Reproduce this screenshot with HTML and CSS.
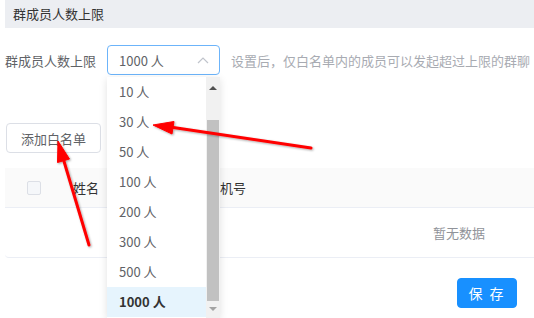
FILE: index.html
```html
<!DOCTYPE html>
<html lang="zh-CN">

<head>
    <meta charset="UTF-8">
    <meta name="viewport" content="width=device-width, initial-scale=1.0">
    <title>群成员人数上限</title>
    <link rel="stylesheet" href="styles.css">
</head>

<body>
    <div class="page">
        <div class="section-title">群成员人数上限</div>

        <div class="form-row">
            <label class="form-label">群成员人数上限</label>
            <div class="select is-focus">
                <span class="select-value">1000 人</span>
                <svg class="select-arrow" width="12" height="8" viewBox="0 0 12 8">
                    <path d="M1 7 L6 2 L11 7" fill="none" stroke="#c0c4cc" stroke-width="1.2"/>
                </svg>
            </div>
            <span class="form-tip">设置后，仅白名单内的成员可以发起超过上限的群聊</span>
        </div>

        <button class="btn">添加白名单</button>

        <div class="table">
            <div class="table-head">
                <div class="cell cell-check"><span class="checkbox"></span></div>
                <div class="cell cell-name">姓名</div>
                <div class="cell cell-phone">手机号</div>
            </div>
            <div class="table-empty">暂无数据</div>
        </div>

        <div class="footer">
            <button class="btn btn-primary">保 存</button>
        </div>
    </div>

    <!-- dropdown of the focused select -->
    <div class="dropdown">
        <ul class="dropdown-list">
            <li>10 人</li>
            <li>30 人</li>
            <li>50 人</li>
            <li>100 人</li>
            <li>200 人</li>
            <li>300 人</li>
            <li>500 人</li>
            <li class="selected">1000 人</li>
        </ul>
        <div class="scrollbar">
            <span class="scroll-up"></span>
            <span class="scroll-thumb"></span>
            <span class="scroll-down"></span>
        </div>
    </div>

    <!-- annotation arrows -->
    <svg class="arrows" width="534" height="318" viewBox="0 0 534 318">
        <defs>
            <filter id="shadow" x="-20%" y="-20%" width="140%" height="140%">
                <feDropShadow dx="1" dy="1" stdDeviation="1" flood-color="#000" flood-opacity="0.35"/>
            </filter>
        </defs>
        <g filter="url(#shadow)" fill="#ff0000" stroke="#ff0000">
            <line x1="311" y1="148" x2="170" y2="127" stroke-width="3" stroke-linecap="round"/>
            <polygon points="153,125 174,121.5 172,134" stroke-width="1" stroke-linejoin="round"/>
            <line x1="89" y1="245" x2="63" y2="158" stroke-width="3" stroke-linecap="round"/>
            <polygon points="58,141 69.5,159 57.5,162.5" stroke-width="1" stroke-linejoin="round"/>
        </g>
    </svg>
</body>

</html>
```

FILE: styles.css
```css
body {
    margin: 0;
    width: 534px;
    height: 318px;
    overflow: hidden;
    position: relative;
    font-family: "Noto Sans CJK SC", "Noto Sans", sans-serif;
    font-size: 13px;
    color: #606266;
    background-color: #fff;
}

.page {
    padding-left: 5px;
}

.section-title {
    height: 28px;
    line-height: 28px;
    padding-left: 8px;
    background-color: #eceef2;
    color: #333;
}

.form-row {
    display: flex;
    align-items: center;
    margin-top: 17px;
    height: 30px;
    white-space: nowrap;
}

.form-label {
    width: 93px;
    margin-right: 9px;
}

.select {
    display: flex;
    align-items: center;
    justify-content: space-between;
    box-sizing: border-box;
    width: 113px;
    height: 30px;
    padding: 0 10px 0 11px;
    border: 1px solid #dcdfe6;
    border-radius: 4px;
    flex-shrink: 0;
}

.select.is-focus {
    border-color: #6cb4fa;
}

.select-value {
    color: #606266;
}

.form-tip {
    margin-left: 11px;
    color: #a8abb2;
}

.btn {
    display: block;
    box-sizing: border-box;
    height: 30px;
    padding: 0 14px;
    border: 1px solid #dcdfe6;
    border-radius: 4px;
    background-color: #fff;
    font-family: inherit;
    font-size: 13px;
    color: #606266;
}

.form-row + .btn {
    margin-top: 48px;
    margin-left: 1px;
    width: 95px;
}

.table {
    margin-top: 15px;
    width: 908px;
    border-bottom: 1px solid #ebeef5;
    border-radius: 0 0 4px 4px;
}

.table-head {
    display: flex;
    align-items: center;
    height: 39px;
    background-color: #fafafa;
    border-bottom: 1px solid #ebeef5;
    color: #333;
}

.cell-check {
    width: 68px;
    padding-left: 22px;
    box-sizing: border-box;
    display: flex;
}

.checkbox {
    width: 14px;
    height: 14px;
    box-sizing: border-box;
    border: 1px solid #dcdfe6;
    border-radius: 2px;
    background-color: #f5f7fa;
}

.cell-name {
    width: 134px;
}

.table-empty {
    height: 49px;
    line-height: 49px;
    text-align: center;
    color: #909399;
}

.footer {
    margin-top: 20px;
    padding-left: 452px;
}

.btn-primary {
    width: 60px;
    height: 30px;
    padding: 0;
    border-color: #1890ff;
    background-color: #1890ff;
    color: #fff;
    font-size: 14px;
    letter-spacing: 2px;
}

.dropdown {
    position: absolute;
    left: 107px;
    top: 77px;
    width: 113px;
    height: 241px;
    display: flex;
    background-color: #fff;
    box-shadow: 0 2px 8px rgba(0, 0, 0, 0.12);
}

.dropdown-list {
    list-style: none;
    margin: 0;
    padding: 0;
    width: 99px;
}

.dropdown-list li {
    height: 30px;
    line-height: 30px;
    padding-left: 12px;
    color: #606266;
}

.dropdown-list li.selected {
    background-color: #e6f4fd;
    color: #333;
    font-weight: bold;
}

.scrollbar {
    width: 14px;
    background-color: #f1f1f1;
    display: flex;
    flex-direction: column;
    align-items: center;
}

.scroll-up,
.scroll-down {
    width: 0;
    height: 0;
    border-left: 4px solid transparent;
    border-right: 4px solid transparent;
}

.scroll-up {
    margin-top: 9px;
    border-bottom: 4px solid #505050;
}

.scroll-down {
    margin-top: 6px;
    border-top: 4px solid #a3a3a3;
}

.scroll-thumb {
    margin-top: 30px;
    width: 12px;
    height: 181px;
    background-color: #c1c1c1;
}

.arrows {
    position: absolute;
    left: 0;
    top: 0;
    pointer-events: none;
}
```
